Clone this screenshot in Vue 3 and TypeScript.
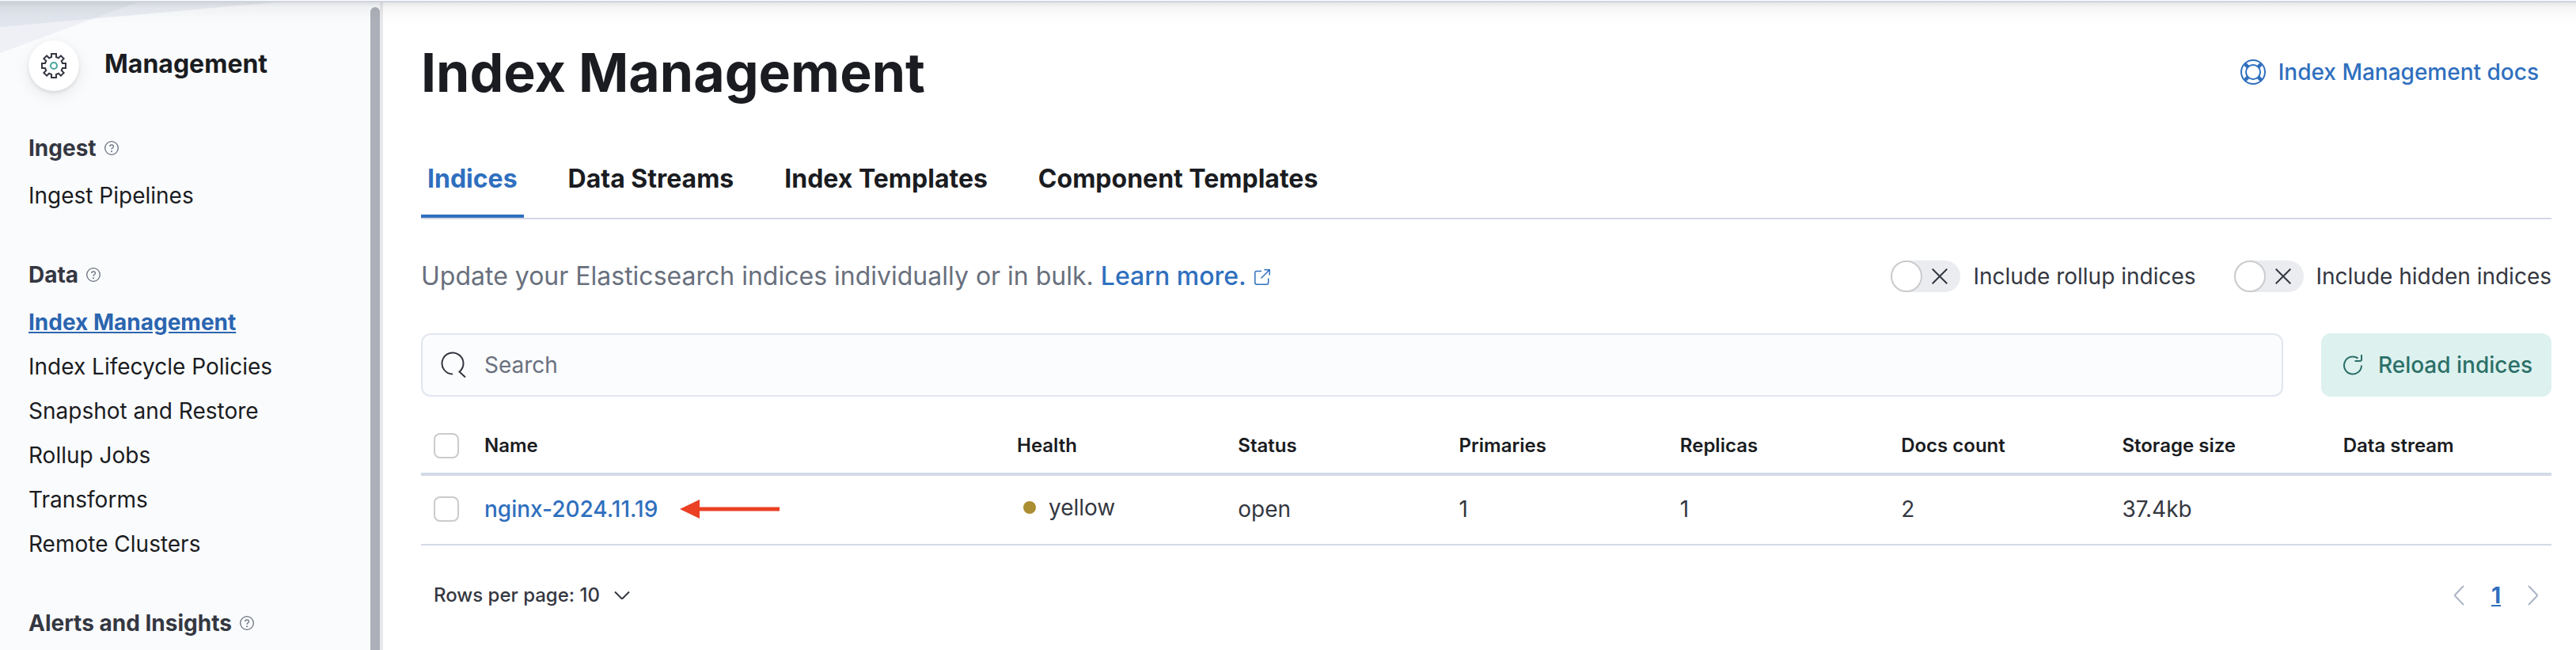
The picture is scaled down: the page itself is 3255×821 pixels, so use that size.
<script setup lang="ts">
import { ref } from 'vue'

interface NavItem { label: string; active?: boolean }
interface NavSection { title: string; items: NavItem[] }

const sections: NavSection[] = [
  { title: 'Ingest', items: [{ label: 'Ingest Pipelines' }] },
  {
    title: 'Data',
    items: [
      { label: 'Index Management', active: true },
      { label: 'Index Lifecycle Policies' },
      { label: 'Snapshot and Restore' },
      { label: 'Rollup Jobs' },
      { label: 'Transforms' },
      { label: 'Remote Clusters' },
    ],
  },
  { title: 'Alerts and Insights', items: [] },
]

const tabs = ['Indices', 'Data Streams', 'Index Templates', 'Component Templates']
const activeTab = ref('Indices')
const filters = ref([
  { id: 'rollup', label: 'Include rollup indices', on: false },
  { id: 'hidden', label: 'Include hidden indices', on: false },
])
const query = ref('')
const columns = ['Name', 'Health', 'Status', 'Primaries', 'Replicas', 'Docs count', 'Storage size', 'Data stream']
const rows = [
  { name: 'nginx-2024.11.19', health: 'yellow', status: 'open', primaries: 1, replicas: 1, docs: 2, size: '37.4kb', stream: '' },
]
</script>

<template>
  <div class="page">
    <div class="top-edge"></div>
    <aside class="sidebar">
      <svg class="facets" width="348" height="68" viewBox="0 0 348 68" aria-hidden="true">
        <path d="M0 0H348L0 31Z" fill="#c3c9db" fill-opacity=".28" />
        <path d="M0 0H173L0 64Z" fill="#c3c9db" fill-opacity=".22" />
      </svg>
      <div class="brand">
        <span class="avatar">
          <svg width="32" height="32" viewBox="0 0 32 32" fill="none" aria-hidden="true">
            <path stroke="#343741" stroke-width="2" d="M13 1h6v4l3 1.300 2.900-2.900 3.700 3.700L25.700 10l1.300 3h4v6h-4l-1.300 3 2.900 2.900-3.700 3.700L22 25.700 19 27v4h-6v-4l-3-1.300-2.900 2.900-3.700-3.700L6.300 22 5 19H1v-6h4l1.300-3-2.900-2.900 3.700-3.700L10 6.300 13 5z" />
            <circle cx="16" cy="16" r="4" stroke="#46a79d" stroke-width="2" />
          </svg>
        </span>
        <h2>Management</h2>
      </div>
      <nav>
        <section v-for="section in sections" :key="section.title" class="group">
          <h3>
            {{ section.title }}
            <svg width="18" height="18" viewBox="0 0 18 18" fill="none" stroke="#69707d" aria-hidden="true">
              <circle cx="9" cy="9" r="8.300" stroke-width="1.300" />
              <path stroke-width="1.300" d="M6.700 7.100c0-3 4.700-2.900 4.700-.2 0 1.900-2.400 1.800-2.400 3.900" />
              <circle cx="9" cy="13.200" r="1" fill="#69707d" stroke="none" />
            </svg>
          </h3>
          <ul v-if="section.items.length">
            <li v-for="item in section.items" :key="item.label">
              <a href="#" :class="{ active: item.active }">{{ item.label }}</a>
            </li>
          </ul>
        </section>
      </nav>
      <div class="scrollbar"></div>
    </aside>

    <main>
      <header class="title-row">
        <h1>Index Management</h1>
        <a href="#" class="docs">
          <svg width="32" height="32" viewBox="0 0 32 32" fill="none" stroke="currentColor" aria-hidden="true">
            <circle cx="16" cy="16" r="15" stroke-width="2" />
            <circle cx="16" cy="16" r="9" stroke-width="2" />
            <path stroke-width="4.500" d="M5.800 5.800l4 4M26.200 5.800l-4 4M5.800 26.200l4-4M26.200 26.200l-4-4" />
          </svg>
          Index Management docs
        </a>
      </header>

      <div class="tabs" role="tablist">
        <button
          v-for="tab in tabs"
          :key="tab"
          type="button"
          role="tab"
          :aria-selected="tab === activeTab"
          :class="{ selected: tab === activeTab }"
          @click="activeTab = tab"
        >{{ tab }}</button>
      </div>

      <div class="intro">
        <p>
          Update your Elasticsearch indices individually or in bulk.
          <a href="#">Learn more.<svg width="20" height="20" viewBox="0 0 20 20" fill="none" stroke="currentColor" stroke-width="1.500" aria-hidden="true">
            <path d="M9 2.500H3Q.8 2.500.8 4.700V17q0 2.200 2.200 2.200h12.500q2.200 0 2.200-2.200v-5.500M12.500.8h6.700v6.700M19.200.8L8.500 11.500" />
          </svg></a>
        </p>
        <div class="filters">
          <label v-for="f in filters" :key="f.id" class="switch">
            <input v-model="f.on" type="checkbox" role="switch" />
            <span class="track">
              <span class="thumb"></span>
              <svg width="20" height="20" viewBox="0 0 20 20" stroke="#343741" stroke-width="2" aria-hidden="true">
                <path d="M.7.7l18.600 18.600M19.300.7L.7 19.300" />
              </svg>
            </span>
            {{ f.label }}
          </label>
        </div>
      </div>

      <div class="tools">
        <label class="search">
          <svg width="34" height="34" viewBox="0 0 34 34" fill="none" stroke="#343741" stroke-width="2" aria-hidden="true">
            <path d="M16 28.500A13.500 13.500 0 1 1 24.500 25.500L32 32.500" />
          </svg>
          <input v-model="query" type="search" placeholder="Search" aria-label="Search" />
        </label>
        <button type="button" class="reload">
          <svg width="24" height="28" viewBox="0 0 24 28" fill="none" stroke="currentColor" stroke-width="2" aria-hidden="true">
            <path d="M23 14.500A11 11 0 1 1 18.500 5.600M23 1v6q0 2-2 2h-6.500" />
          </svg>
          Reload indices
        </button>
      </div>

      <table>
        <thead>
          <tr>
            <th class="check"><input type="checkbox" aria-label="Select all rows" /></th>
            <th v-for="c in columns" :key="c" :class="{ name: c === 'Name' }" scope="col">{{ c }}</th>
          </tr>
        </thead>
        <tbody>
          <tr v-for="r in rows" :key="r.name">
            <td class="check"><input type="checkbox" :aria-label="'Select ' + r.name" /></td>
            <td>
              <div class="name-cell">
                <a href="#">{{ r.name }}</a>
                <svg width="126" height="24" viewBox="0 0 126 24" fill="#eb4024" aria-hidden="true">
                  <path d="M0 12L25 0v9.500h101v5H25V24z" />
                </svg>
              </div>
            </td>
            <td><span class="health"><i></i>{{ r.health }}</span></td>
            <td>{{ r.status }}</td>
            <td>{{ r.primaries }}</td>
            <td>{{ r.replicas }}</td>
            <td>{{ r.docs }}</td>
            <td>{{ r.size }}</td>
            <td>{{ r.stream }}</td>
          </tr>
        </tbody>
      </table>

      <footer>
        <button type="button" class="per-page">
          Rows per page: 10
          <svg width="20" height="12" viewBox="0 0 20 12" fill="none" stroke="currentColor" stroke-width="2" aria-hidden="true">
            <path d="M1 1.500l8 8q1 1 2 0l8-8" />
          </svg>
        </button>
        <nav class="pager" aria-label="Pages">
          <button type="button" disabled aria-label="Previous page">
            <svg width="14" height="26" viewBox="0 0 14 26" fill="none" stroke="#abb4c4" stroke-width="2" aria-hidden="true">
              <path d="M13 1L2.500 12q-1 1 0 2L13 25" />
            </svg>
          </button>
          <a href="#" aria-current="page">1</a>
          <button type="button" disabled aria-label="Next page">
            <svg width="14" height="26" viewBox="0 0 14 26" fill="none" stroke="#abb4c4" stroke-width="2" aria-hidden="true">
              <path d="M1 1l10.500 11q1 1 0 2L1 25" />
            </svg>
          </button>
        </nav>
      </footer>
    </main>
  </div>
</template>

<style>
body { margin: 0; background: #fff; }
</style>

<style scoped>
* { box-sizing: border-box; }
.page {
  position: relative;
  display: flex;
  min-height: 100vh;
  overflow: hidden;
  font-family: Inter, "Liberation Sans", sans-serif;
  font-size: 28px;
  line-height: 40px;
  color: #343741;
}
h1, h2, h3, p, ul { margin: 0; padding: 0; }
ul { list-style: none; }
a { color: #2f6fbe; font-weight: 500; text-decoration: none; }
button { border: 0; padding: 0; background: none; font: inherit; color: inherit; }
svg { flex: none; }

.top-edge {
  position: absolute;
  z-index: 2;
  inset: 0 0 auto;
  height: 32px;
  border-top: 1px solid #fff;
  background: linear-gradient(#cfd4e0 2px, rgba(0, 0, 0, .1) 2px, rgba(0, 0, 0, .04) 8px, rgba(0, 0, 0, .01) 20px, transparent 30px);
  pointer-events: none;
}

.sidebar {
  position: relative;
  flex: none;
  width: 484px;
  padding: 51px 36px 0;
  background: #fafbfd;
  border-right: 4px solid #e8e9ec;
}
.facets { position: absolute; top: 3px; left: 0; }
.brand { position: relative; display: flex; align-items: center; gap: 32px; }
.avatar {
  display: flex;
  align-items: center;
  justify-content: center;
  width: 64px;
  height: 64px;
  border-radius: 50%;
  background: #fff;
  box-shadow: 0 2px 4px rgba(0, 0, 0, .1), 0 6px 20px rgba(0, 0, 0, .08);
}
h2 { padding-bottom: 4px; font-size: 32px; font-weight: 700; color: #1a1c21; }
.brand + nav { padding-top: 52px; }
.group + .group { padding-top: 52px; }
h3 { display: flex; align-items: center; gap: 10px; font-size: 28px; font-weight: 700; }
.group ul { padding-top: 12px; }
.group li { padding: 8px 0; }
.group a { color: #1a1c21; font-weight: 400; }
.group a.active { color: #2b65b0; font-weight: 700; text-decoration: underline; }
.scrollbar {
  position: absolute;
  top: 9px;
  right: 0;
  bottom: 0;
  width: 12px;
  border-radius: 6px 6px 0 0;
  background: #adb0b8;
}

main { flex: 1; min-width: 0; padding: 48px 31px 0 48px; }
.title-row { display: flex; align-items: center; justify-content: space-between; padding-right: 16px; }
h1 { font-size: 68px; line-height: 86px; font-weight: 700; color: #1a1c21; }
.docs { display: flex; align-items: center; gap: 16px; }

.tabs { display: flex; gap: 48px; margin-top: 45px; border-bottom: 2px solid #d3d7e5; }
.tabs button {
  padding: 27px 8px 25px;
  border-bottom: 4px solid transparent;
  font-size: 32px;
  font-weight: 700;
  color: #1a1c21;
}
.tabs .selected { color: #2f6fbe; border-color: #2f6fbe; }

.intro { display: flex; align-items: center; justify-content: space-between; margin-top: 48px; }
.intro p { font-size: 32px; line-height: 48px; color: #69707d; }
.intro p svg { margin-left: 10px; }
.filters { display: flex; gap: 48px; }
.switch { display: flex; align-items: center; gap: 16px; }
.switch input { position: absolute; opacity: 0; }
.track {
  display: flex;
  align-items: center;
  gap: 12px;
  width: 88px;
  height: 40px;
  border-radius: 20px;
  background: #ebecf0;
}
.thumb { width: 40px; height: 40px; border: 2px solid #c9cbcd; border-radius: 50%; background: #fff; }

.tools { display: flex; gap: 48px; margin-top: 48px; }
.search {
  display: flex;
  flex: 1;
  align-items: center;
  gap: 22px;
  height: 80px;
  padding: 0 22px;
  border: 2px solid #e3e5f1;
  border-radius: 12px;
  background: #fbfcfd;
}
.search input { flex: 1; min-width: 0; border: 0; padding: 0; outline: 0; background: none; font: inherit; color: inherit; }
.search input::placeholder { color: #69707d; opacity: 1; }
.reload {
  display: flex;
  align-items: center;
  gap: 20px;
  padding: 0 24px 0 28px;
  border-radius: 12px;
  background: #ddf1ef;
  color: #2b7068;
  font-weight: 500;
}

table { width: 100%; margin-top: 32px; border-collapse: separate; border-spacing: 0; table-layout: fixed; }
th, td { padding: 0 16px; text-align: left; vertical-align: middle; }
th { height: 68px; padding-bottom: 4px; border-bottom: 4px solid #d3dae6; font-size: 24px; font-weight: 600; color: #1a1c21; }
td { height: 88px; padding-bottom: 2px; border-bottom: 2px solid #d3dae6; }
th.name { width: 25%; }
.check { width: 64px; }
.check input {
  display: block;
  appearance: none;
  width: 32px;
  height: 32px;
  margin: 0;
  border: 2px solid #c9cbcd;
  border-radius: 8px;
  background: #fff;
}
.name-cell { display: flex; align-items: center; gap: 28px; }
.health { display: flex; align-items: center; gap: 16px; padding: 0 0 4px 8px; }
.health i { width: 16px; height: 16px; border-radius: 50%; background: #ab8e32; }

footer { display: flex; align-items: center; justify-content: space-between; padding: 43px 16px 0; }
.per-page { display: flex; align-items: center; gap: 18px; font-size: 24px; font-weight: 500; }
.pager { display: flex; align-items: center; gap: 34px; }
.pager button { display: flex; }
.pager a { font-weight: 700; text-decoration: underline; }
</style>
